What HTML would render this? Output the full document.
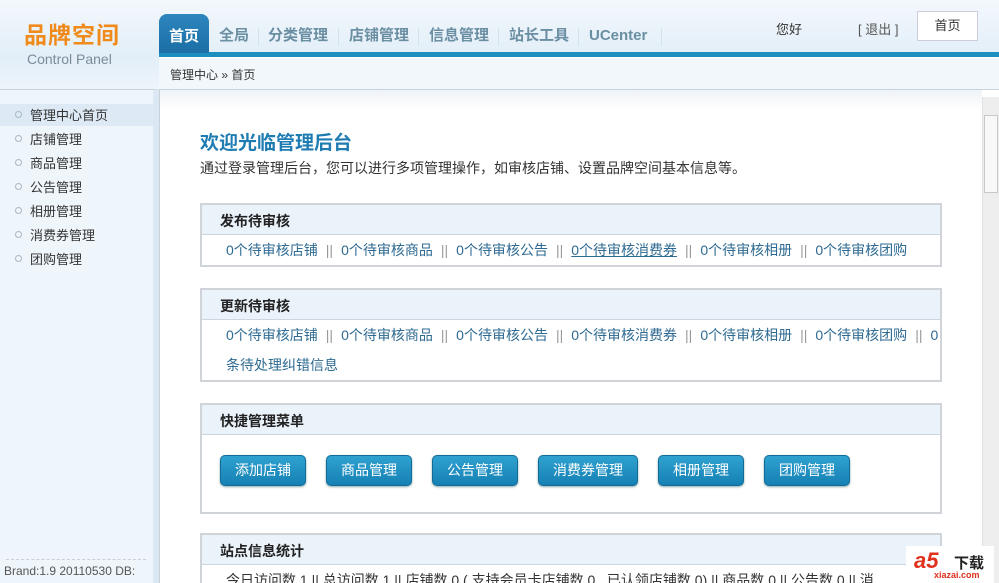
<!DOCTYPE html>
<html style="width:999px;height:583px;overflow:hidden"><head><meta charset="utf-8"><style>
*{margin:0;padding:0;box-sizing:border-box}
body{width:999px;height:583px;overflow:hidden;position:relative;font-family:"Liberation Sans","Noto Sans CJK SC",sans-serif;font-size:13px;color:#333;background:#fff}
.a{position:absolute}
#hd{left:0;top:0;width:999px;height:89px;background:linear-gradient(#f3f8fc,#e2eef8 57px,#eef5fb)}
#line{left:159px;top:52px;width:840px;height:5px;background:#1a8fc0}
.logo{left:24px;top:21px;font-size:23px;font-weight:bold;color:#f08a1a;letter-spacing:1px;line-height:28px}
.cp{left:27px;top:51px;font-size:14px;color:#7a8c99}
.tab{top:27px;font-size:15px;font-weight:bold;color:#6a8ea2;line-height:18px}
.sep{top:28px;width:1px;height:18px;background:#d4e2ec}
#cur{left:159px;top:14px;width:50px;height:39px;border-radius:8px 8px 0 0;background:linear-gradient(#2d86bd,#1b6ea6);color:#fff;font-size:15px;font-weight:bold;text-align:center;padding-top:11px}
#bc{left:159px;top:57px;width:840px;height:33px;background:#f2f7fb;border-top:1px solid #fff;border-bottom:1px solid #c9d1d8;font-size:12px;padding:8px 0 0 11px}
#side{left:0;top:89px;width:159px;height:494px;background:#eef5fb;border-top:1px solid #c9d1d8;border-right:6px solid #dbe8f3}
.mi{position:absolute;left:0;width:153px;height:22px;font-size:13px;color:#333;padding:1px 0 0 30px}
.mi:before{content:"";position:absolute;left:15px;top:7px;width:5px;height:5px;border:1px solid #a8b8c4;border-radius:50%}
#main{left:159px;top:90px;width:823px;height:493px;border-left:1px solid #c9d1d8;background:linear-gradient(#eef3f7,#fff 20px)}
#sb{left:982px;top:97px;width:17px;height:486px;background:#eeeeee;border-left:1px solid #e0e0e0}
.box{position:absolute;left:200px;width:742px;border:2px solid #d0d4d8;background:#fff;overflow:hidden}
.bh{height:30px;background:#eaf2fa;border-bottom:1px solid #cdd6de;font-weight:bold;font-size:14px;padding:6px 0 0 18px;color:#222}
.bl{font-size:14px;color:#2e6a92;padding:0 0 0 24px;line-height:30px}
.bl i{font-style:normal;color:#999;margin:0 8px}
.btn{position:absolute;top:455px;height:31px;border-radius:5px;background:linear-gradient(#2fa2d0,#1580b4);border:1px solid #136c98;color:#fff;font-size:14px;text-align:center;line-height:28px;box-shadow:0 1px 2px #8aa}
</style></head><body>
<div id="hd" class="a"></div>
<div class="a logo">品牌空间</div>
<div class="a cp">Control Panel</div>
<div id="line" class="a"></div>
<div id="cur" class="a">首页</div>
<div class="a tab" style="left:219px">全局</div><div class="a sep" style="left:258px"></div>
<div class="a tab" style="left:268px">分类管理</div><div class="a sep" style="left:338px"></div>
<div class="a tab" style="left:349px">店铺管理</div><div class="a sep" style="left:418px"></div>
<div class="a tab" style="left:429px">信息管理</div><div class="a sep" style="left:498px"></div>
<div class="a tab" style="left:509px">站长工具</div><div class="a sep" style="left:578px"></div>
<div class="a tab" style="left:589px;font-size:15px">UCenter</div><div class="a sep" style="left:661px"></div>
<div class="a" style="left:776px;top:19px;font-size:13px">您好</div>
<div class="a" style="left:858px;top:19px;font-size:13px;color:#555">[ 退出 ]</div>
<div class="a" style="left:917px;top:11px;width:61px;height:30px;border:1px solid #ccd;background:#fff;text-align:center;line-height:28px;font-size:13px">首页</div>
<div id="bc" class="a">管理中心 » 首页</div>
<div id="side" class="a">
<div class="mi" style="top:14px;background:#dde9f4">管理中心首页</div>
<div class="mi" style="top:38px">店铺管理</div>
<div class="mi" style="top:62px">商品管理</div>
<div class="mi" style="top:86px">公告管理</div>
<div class="mi" style="top:110px">相册管理</div>
<div class="mi" style="top:134px">消费券管理</div>
<div class="mi" style="top:158px">团购管理</div>
<div style="position:absolute;left:6px;top:469px;width:140px;border-top:1px dashed #ccd"></div>
<div style="position:absolute;left:4px;top:474px;font-size:12px;color:#555">Brand:1.9 20110530 DB:</div>
</div>
<div id="main" class="a"></div>
<div id="sb" class="a"><div style="position:absolute;left:1px;top:18px;width:14px;height:78px;background:#f8f8f8;border:1px solid #c8c8c8"></div></div>
<div class="a" style="left:200px;top:128px;font-size:19px;color:#1f7cb3;font-weight:bold">欢迎光临管理后台</div>
<div class="a" style="left:200px;top:158px;font-size:14px;color:#333">通过登录管理后台，您可以进行多项管理操作，如审核店铺、设置品牌空间基本信息等。</div>
<div class="box" style="top:203px;height:64px"><div class="bh">发布待审核</div><div class="bl">0个待审核店铺<i>||</i>0个待审核商品<i>||</i>0个待审核公告<i>||</i><u>0个待审核消费券</u><i>||</i>0个待审核相册<i>||</i>0个待审核团购</div></div>
<div class="box" style="top:288px;height:94px"><div class="bh">更新待审核</div><div class="bl">0个待审核店铺<i>||</i>0个待审核商品<i>||</i>0个待审核公告<i>||</i>0个待审核消费券<i>||</i>0个待审核相册<i>||</i>0个待审核团购<i>||</i>0<br>条待处理纠错信息</div></div>
<div class="box" style="top:403px;height:111px"><div class="bh">快捷管理菜单</div></div>
<div class="btn" style="left:220px;width:86px">添加店铺</div>
<div class="btn" style="left:326px;width:86px">商品管理</div>
<div class="btn" style="left:432px;width:86px">公告管理</div>
<div class="btn" style="left:538px;width:100px">消费券管理</div>
<div class="btn" style="left:658px;width:86px">相册管理</div>
<div class="btn" style="left:764px;width:86px">团购管理</div>
<div class="box" style="top:533px;height:60px"><div class="bh">站点信息统计</div><div class="bl" style="white-space:nowrap;color:#333">今日访问数 1 || 总访问数 1 || 店铺数 0 ( 支持会员卡店铺数 0 , 已认领店铺数 0) || 商品数 0 || 公告数 0 || 消</div></div>
<div class="a" style="left:906px;top:546px;width:88px;height:37px;background:#fff"><span style="position:absolute;left:8px;top:2px;font-size:22px;font-weight:bold;color:#e0301e;font-style:italic">a5</span><span style="position:absolute;left:48px;top:6px;font-size:15px;font-weight:bold;color:#222">下载</span><span style="position:absolute;left:28px;top:24px;font-size:9px;font-weight:bold;color:#e0301e">xiazai.com</span></div>
</body></html>
